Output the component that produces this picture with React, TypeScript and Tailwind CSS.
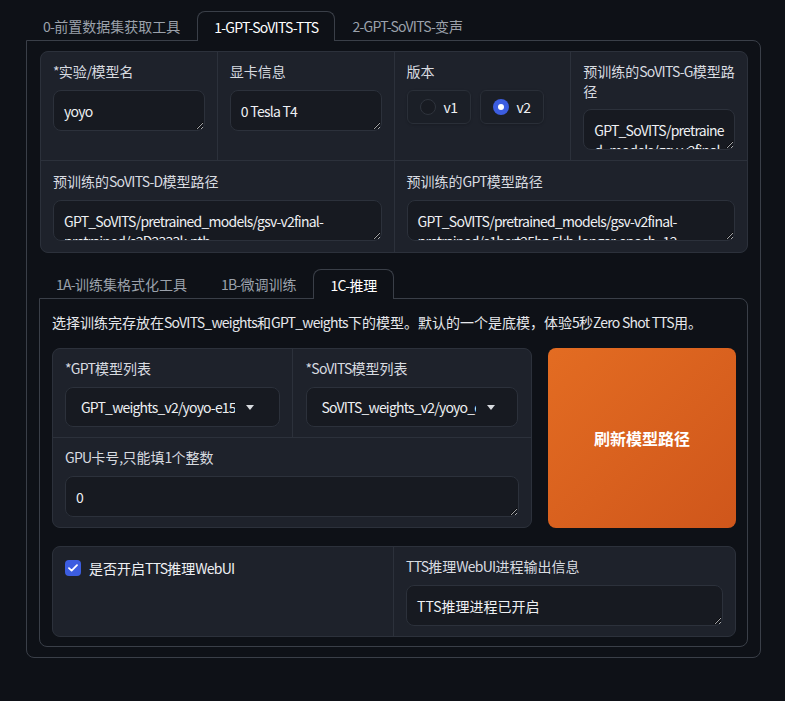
const font = "font-['Noto_Sans_CJK_SC','Noto_Sans',sans-serif]"

// latin runs in the CJK font come out wider than the original, so tighten them
function T({ children }: { children: string }) {
  const parts = children.split(/([\x20-\x7e]+)/)
  return (
    <>
      {parts.map((p, i) =>
        /^[\x20-\x7e]+$/.test(p) ? (
          <span key={i} className="tracking-[-0.75px]">
            {p}
          </span>
        ) : (
          p
        ),
      )}
    </>
  )
}

function Label({ children }: { children: string }) {
  return (
    <div className="text-[14px] leading-[20px] text-[#d8dbe0]">
      <T>{children}</T>
    </div>
  )
}

function Area({ value, tight = true }: { value: string; tight?: boolean }) {
  return (
    <textarea
      readOnly
      value={value}
      className={`block w-full h-[41px] resize-y overflow-hidden rounded-lg border border-[#2c313b] bg-[#171a21] px-[10px] py-[10px] text-[14px] leading-[20px] text-[#eef0f3] outline-none ${tight ? 'tracking-[-0.75px]' : ''}`}
    />
  )
}

function Caret() {
  return (
    <svg width="8" height="5" viewBox="0 0 8 5" className="shrink-0">
      <path d="M0 0h8L4 5z" fill="#d8dbe0" />
    </svg>
  )
}

function Dropdown({ value }: { value: string }) {
  return (
    <div className="flex h-[40px] items-center rounded-lg border border-[#2c313b] bg-[#171a21] pl-[15px]">
      <div className="w-[154px] overflow-hidden whitespace-nowrap text-[14px] leading-[20px] tracking-[-0.8px] text-[#eef0f3]">
        {value}
      </div>
      <div className="ml-[11px]">
        <Caret />
      </div>
    </div>
  )
}

function Radio({ label, checked }: { label: string; checked?: boolean }) {
  return (
    <div className="flex h-[34px] items-center gap-[8px] rounded-md border border-[#2a2f38] bg-[#1b1f27] pl-[12px] pr-[12px] shadow-sm">
      {checked ? (
        <div className="flex h-[16px] w-[16px] items-center justify-center rounded-full bg-[#3c5de0]">
          <div className="h-[6px] w-[6px] rounded-full bg-white" />
        </div>
      ) : (
        <div className="h-[16px] w-[16px] rounded-full border border-[#2f343d] bg-[#181b22]" />
      )}
      <span className="text-[14px] leading-[20px] tracking-[-0.5px] text-[#eef0f3]">{label}</span>
    </div>
  )
}

function Tab({ label, active }: { label: string; active?: boolean }) {
  if (active) {
    return (
      <div className="relative z-10 -mb-px flex h-[30px] items-center rounded-t-lg border border-b-0 border-[#3a3f48] bg-[#0e1117] px-[16px] text-white">
        <T>{label}</T>
      </div>
    )
  }
  return (
    <div className="flex items-center px-[17px] text-[#9ba1ab]">
      <T>{label}</T>
    </div>
  )
}

export default function App() {
  return (
    <div className={`${font} h-[701px] w-[785px] bg-[#0e1117] pt-[11px] [color-scheme:dark]`}>
      <div className="ml-[26px] w-[735px]">
        {/* top tabs */}
        <div className="flex h-[29px] text-[14px] leading-[20px]">
          <Tab label="0-前置数据集获取工具" />
          <Tab label="1-GPT-SoVITS-TTS" active />
          <Tab label="2-GPT-SoVITS-变声" />
        </div>

        <div className="rounded-b-lg rounded-tr-lg border border-[#3a3f48] pb-[10px] pl-[13px] pr-[12px] pt-[10px]">
          {/* config block */}
          <div className="flex flex-col gap-px overflow-hidden rounded-lg border border-[#2c313b] bg-[#2c313b]">
            <div className="grid grid-cols-4 gap-px">
              <div className="flex flex-col gap-[9px] bg-[#1e222b] px-[12px] pt-[9px]">
                <Label>*实验/模型名</Label>
                <Area value="yoyo" />
              </div>
              <div className="flex flex-col gap-[9px] bg-[#1e222b] px-[12px] pt-[9px]">
                <Label>显卡信息</Label>
                <Area value="0	Tesla T4" />
              </div>
              <div className="flex flex-col gap-[9px] bg-[#1e222b] px-[12px] pt-[9px]">
                <Label>版本</Label>
                <div className="flex gap-[9px]">
                  <Radio label="v1" />
                  <Radio label="v2" checked />
                </div>
              </div>
              <div className="flex flex-col gap-[8px] bg-[#1e222b] px-[12px] pb-[10px] pt-[9px]">
                <Label>预训练的SoVITS-G模型路径</Label>
                <Area value="GPT_SoVITS/pretrained_models/gsv-v2final-pretrained/s2G2333k.pth" />
              </div>
            </div>
            <div className="grid grid-cols-2 gap-px">
              <div className="flex flex-col gap-[9px] bg-[#1e222b] px-[12px] pb-[11px] pt-[10px]">
                <Label>预训练的SoVITS-D模型路径</Label>
                <Area value="GPT_SoVITS/pretrained_models/gsv-v2final-pretrained/s2D2333k.pth" />
              </div>
              <div className="flex flex-col gap-[9px] bg-[#1e222b] px-[12px] pb-[11px] pt-[10px]">
                <Label>预训练的GPT模型路径</Label>
                <Area value="GPT_SoVITS/pretrained_models/gsv-v2final-pretrained/s1bert25hz-5kh-longer-epoch=12-step=369668.ckpt" />
              </div>
            </div>
          </div>

          {/* inner tabs */}
          <div className="mt-[16px] -ml-px">
            <div className="flex h-[29px] text-[14px] leading-[20px]">
              <Tab label="1A-训练集格式化工具" />
              <Tab label="1B-微调训练" />
              <Tab label="1C-推理" active />
            </div>
            <div className="rounded-b-lg rounded-tr-lg border border-[#3a3f48] pb-[9px] pl-[12px] pr-[11px] pt-[13px]">
              <div className="text-[14px] leading-[20px] text-[#e6e8ec]">
                <T>选择训练完存放在SoVITS_weights和GPT_weights下的模型。默认的一个是底模，体验5秒Zero Shot TTS用。</T>
              </div>

              <div className="mt-[16px] flex gap-[16px]">
                <div className="flex w-[480px] flex-col gap-px overflow-hidden rounded-lg border border-[#2c313b] bg-[#2c313b]">
                  <div className="grid grid-cols-2 gap-px">
                    <div className="flex flex-col gap-[9px] bg-[#1e222b] px-[12px] pb-[10px] pt-[9px]">
                      <Label>*GPT模型列表</Label>
                      <Dropdown value="GPT_weights_v2/yoyo-e15.ckpt" />
                    </div>
                    <div className="flex flex-col gap-[9px] bg-[#1e222b] px-[13px] pb-[10px] pt-[9px]">
                      <Label>*SoVITS模型列表</Label>
                      <Dropdown value="SoVITS_weights_v2/yoyo_e8_s96.pth" />
                    </div>
                  </div>
                  <div className="flex flex-1 flex-col gap-[9px] bg-[#1e222b] px-[12px] pb-[10px] pt-[9px]">
                    <Label>GPU卡号,只能填1个整数</Label>
                    <Area value="0" />
                  </div>
                </div>
                <button className="flex flex-1 items-center justify-center rounded-lg bg-gradient-to-br from-[#e36c22] to-[#cf561b] text-[16px] font-bold text-white">
                  刷新模型路径
                </button>
              </div>

              <div className="mt-[18px] grid grid-cols-[340px_1fr] gap-px overflow-hidden rounded-lg border border-[#2c313b] bg-[#2c313b]">
                <div className="flex items-start gap-[8px] bg-[#1e222b] px-[12px] pt-[12px]">
                  <div className="mt-[1px] flex h-[16px] w-[16px] items-center justify-center rounded-[4px] bg-[#3c5de0]">
                    <svg width="10" height="8" viewBox="0 0 10 8">
                      <path d="M1 4.2l2.6 2.4L9 1.2" fill="none" stroke="white" strokeWidth="1.8" strokeLinecap="round" strokeLinejoin="round" />
                    </svg>
                  </div>
                  <span className="text-[14px] leading-[18px] text-[#eef0f3]">
                    <T>是否开启TTS推理WebUI</T>
                  </span>
                </div>
                <div className="flex flex-col gap-[9px] bg-[#1e222b] px-[12px] pb-[10px] pt-[9px]">
                  <Label>TTS推理WebUI进程输出信息</Label>
                  <Area value="TTS推理进程已开启" tight={false} />
                </div>
              </div>
            </div>
          </div>
        </div>
      </div>
    </div>
  )
}
